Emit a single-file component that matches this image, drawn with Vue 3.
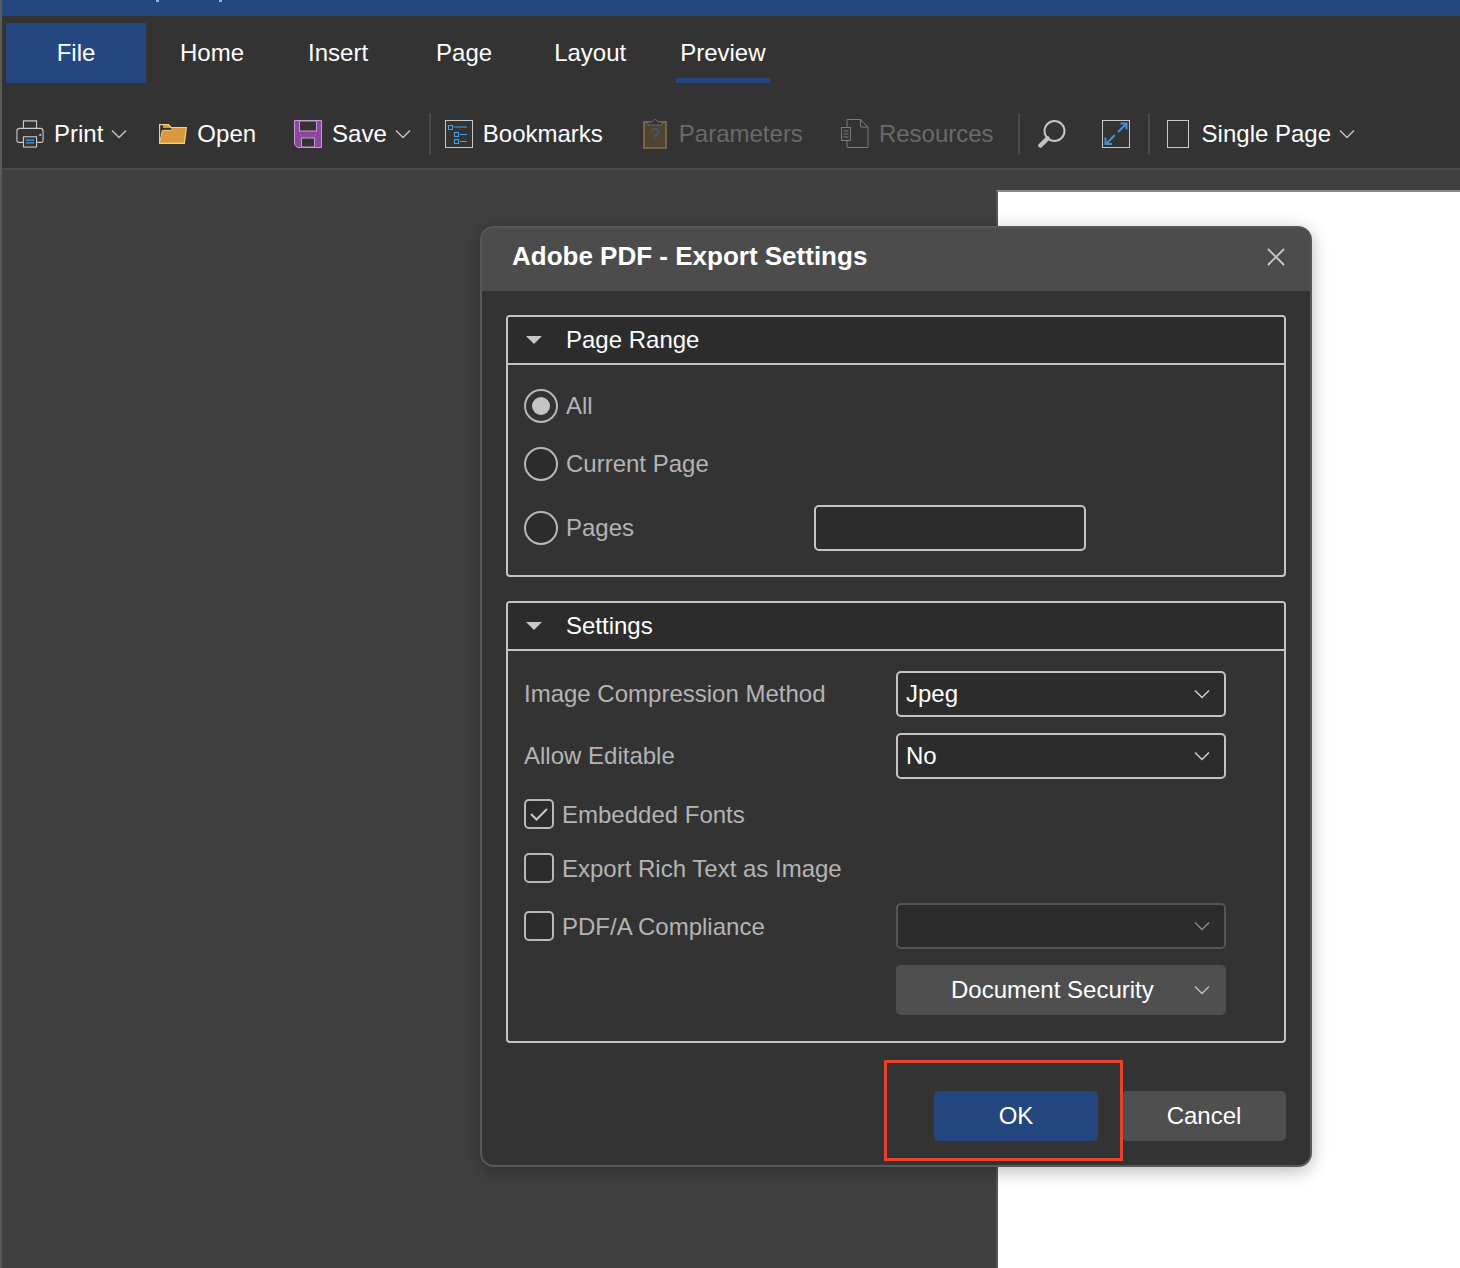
<script setup>
const tabs = [
  { label: 'Home', cls: 'tab-home' },
  { label: 'Insert', cls: 'tab-insert' },
  { label: 'Page', cls: 'tab-page' },
  { label: 'Layout', cls: 'tab-layout' },
  { label: 'Preview', cls: 'tab-preview active' }
];
</script>

<template>
  <div class="app">
    <div class="title-strip"><i class="tick t1"></i><i class="tick t2"></i></div>

    <nav class="tabs">
      <div class="tab-file">File</div>
      <div v-for="t in tabs" :key="t.label" class="tab" :class="t.cls">{{ t.label }}</div>
    </nav>

    <div class="toolbar">
      <div class="tool t-print">
        <svg width="28" height="28" viewBox="0 0 30 30" fill="none">
          <path d="M8 9V1h14v8" stroke="#c8c8c8" stroke-width="1.2"/>
          <path d="M9 24H3a2 2 0 0 1-2-2v-10a3 3 0 0 1 3-3h22a3 3 0 0 1 3 3v10a2 2 0 0 1-2 2h-6" stroke="#c8c8c8" stroke-width="1.2"/>
          <rect x="8" y="18" width="14" height="11" fill="#333" stroke="#c8c8c8" stroke-width="1.2"/>
          <path d="M10.5 21.5h9M10.5 24.5h9" stroke="#4a9ee0" stroke-width="1.4"/>
          <rect x="25" y="15" width="2" height="2" fill="#c8c8c8"/>
        </svg>
        <span>Print</span>
        <svg class="chev c-print" width="16" height="10" viewBox="0 0 16 10" fill="none"><path d="M1 1.5l7 7 7-7" stroke="#c0c0c0" stroke-width="1.5"/></svg>
      </div>
      <div class="tool t-open">
        <svg width="28" height="20" viewBox="0 0 28 20">
          <path d="M0.600 19.400V0.600h9l2.400 2.900H27.400L25.400 19.400z" fill="#d99a3f" stroke="#f0d080" stroke-width="1.200"/>
          <path d="M1.200 19L3.400 6.400H11l1.500-2.300H4V1.200H1.200z" fill="#333"/>
          <path d="M0.600 19.400L3.400 6.400H11.500" fill="none" stroke="#f0d080" stroke-width="1"/>
        </svg>
        <span>Open</span>
      </div>
      <div class="tool t-save">
        <svg width="28" height="28" viewBox="0 0 28 28">
          <path d="M0.500 0.500h27v27H3.500l-3-3z" fill="#8c479e" stroke="#c89ad4" stroke-width="1"/>
          <rect x="5.500" y="1" width="17" height="10" fill="#333" stroke="#c89ad4" stroke-width="1"/>
          <rect x="7.500" y="18" width="13" height="9" fill="#333" stroke="#c89ad4" stroke-width="1"/>
        </svg>
        <span>Save</span>
        <svg class="chev c-save" width="16" height="10" viewBox="0 0 16 10" fill="none"><path d="M1 1.500l7 7 7-7" stroke="#c0c0c0" stroke-width="1.500"/></svg>
      </div>
      <i class="sep s1"></i>
      <div class="tool t-bookmarks">
        <svg width="28" height="28" viewBox="0 0 28 28" fill="none">
          <rect x="0.500" y="0.500" width="27" height="27" stroke="#c8c8c8"/>
          <path d="M3.500 5.500h4v4h-4zM9 7h13M9.500 12.500h4v4h-4zM15 14.500h7M9.500 19.500h4v4h-4zM15 21.500h7" stroke="#4a9ee0" stroke-width="1.100"/>
        </svg>
        <span>Bookmarks</span>
      </div>
      <div class="tool t-params muted">
        <svg width="24" height="31" viewBox="0 0 24 31" fill="none">
          <rect x="1" y="4" width="22" height="26" fill="#4f4434" stroke="#8a6f45" stroke-width="1.600"/>
          <path d="M5 7V4h4l3-3 3 3h4v3z" fill="#333" stroke="#666" stroke-width="1"/>
          <text x="12" y="23" text-anchor="middle" class="q">?</text>
        </svg>
        <span>Parameters</span>
      </div>
      <div class="tool t-resources muted">
        <svg width="28" height="29" viewBox="0 0 28 29" fill="none">
          <path d="M6 28.500h21V8L19.500 0.500H6z" stroke="#7a7a7a" stroke-width="1"/>
          <path d="M19.500 0.500V8H27" stroke="#7a7a7a" stroke-width="1"/>
          <rect x="0.500" y="8.500" width="9" height="13" fill="#333" stroke="#7a7a7a" stroke-width="1"/>
          <path d="M2.500 12h5M2.500 15h5M2.500 18h5" stroke="#7a7a7a" stroke-width="1"/>
        </svg>
        <span>Resources</span>
      </div>
      <i class="sep s2"></i>
      <div class="tool t-search">
        <svg width="28" height="28" viewBox="0 0 28 28" fill="none">
          <circle cx="16.500" cy="11" r="10" stroke="#c4c4c4" stroke-width="2"/>
          <path d="M9.500 18.500L2.500 25.500" stroke="#c4c4c4" stroke-width="4.500" stroke-linecap="round"/>
        </svg>
      </div>
      <div class="tool t-expand">
        <svg width="28" height="28" viewBox="0 0 28 28" fill="none">
          <rect x="0.500" y="0.500" width="27" height="27" stroke="#c8c8c8"/>
          <path d="M16 12l8-8M18.500 3.500h6v6M13 15l-8.500 8.500M3.500 17.500v6.500h6.500" stroke="#4a8fd4" stroke-width="2"/>
        </svg>
      </div>
      <i class="sep s3"></i>
      <div class="tool t-single">
        <span class="page-icon"></span>
        <span>Single Page</span>
        <svg class="chev c-single" width="16" height="10" viewBox="0 0 16 10" fill="none"><path d="M1 1.500l7 7 7-7" stroke="#c0c0c0" stroke-width="1.500"/></svg>
      </div>
    </div>

    <main class="viewer">
      <div class="sheet"></div>
    </main>

    <section class="dialog">
      <header class="dialog-head">
        <h1>Adobe PDF - Export Settings</h1>
        <svg width="18" height="18" viewBox="0 0 18 18" fill="none"><path d="M1 1l16 16M17 1L1 17" stroke="#c8c8c8" stroke-width="1.800"/></svg>
      </header>
      <div class="dialog-body">
        <div class="group">
          <div class="group-head"><span class="caret"></span>Page Range</div>
          <div class="range-body">
            <div class="row r-all"><span class="radio on"></span><label>All</label></div>
            <div class="row r-cur"><span class="radio"></span><label>Current Page</label></div>
            <div class="row r-pages"><span class="radio"></span><label class="pages-label">Pages</label><span class="input"></span></div>
          </div>
        </div>

        <div class="group">
          <div class="group-head"><span class="caret"></span>Settings</div>
          <div class="settings-body">
            <div class="row s-img">
              <label class="col">Image Compression Method</label>
              <div class="select">Jpeg<svg width="16" height="10" viewBox="0 0 16 10" fill="none"><path d="M1 1.500l7 7 7-7" stroke="#d0d0d0" stroke-width="1.500"/></svg></div>
            </div>
            <div class="row s-edit">
              <label class="col">Allow Editable</label>
              <div class="select">No<svg width="16" height="10" viewBox="0 0 16 10" fill="none"><path d="M1 1.500l7 7 7-7" stroke="#d0d0d0" stroke-width="1.500"/></svg></div>
            </div>
            <div class="row s-fonts">
              <span class="check">
                <svg width="20" height="16" viewBox="0 0 20 16" fill="none"><path d="M2 8l5.500 5.500L18 3" stroke="#c4c4c4" stroke-width="2.200"/></svg>
              </span>
              <label class="low">Embedded Fonts</label>
            </div>
            <div class="row s-rich"><span class="check"></span><label class="low">Export Rich Text as Image</label></div>
            <div class="row s-pdfa">
              <span class="check"></span><label class="col-check low">PDF/A Compliance</label>
              <div class="select disabled"><svg width="16" height="10" viewBox="0 0 16 10" fill="none"><path d="M1 1.500l7 7 7-7" stroke="#8a8a8a" stroke-width="1.500"/></svg></div>
            </div>
            <div class="security">
              <span>Document Security</span>
              <svg width="16" height="10" viewBox="0 0 16 10" fill="none"><path d="M1 1.500l7 7 7-7" stroke="#c0c0c0" stroke-width="1.500"/></svg>
            </div>
          </div>
        </div>

        <footer class="actions">
          <button class="btn primary">OK</button>
          <button class="btn">Cancel</button>
        </footer>
      </div>
      <div class="callout"></div>
    </section>
  </div>
</template>

<style>
html, body { margin: 0; background: #404040; }
</style>

<style scoped>
.app {
  position: relative;
  width: 1460px;
  height: 1268px;
  overflow: hidden;
  display: flex;
  flex-direction: column;
  background: #333;
  border-left: 2px solid #5a5a5a;
  box-sizing: border-box;
  font-family: "Liberation Sans", Arial, sans-serif;
  font-size: 24px;
  color: #fff;
}
.title-strip { height: 16px; background: #24477f; flex: none; display: flex; align-items: flex-start; }
.tick { display: block; width: 3px; height: 2px; background: #9fb2cf; }
.t1 { margin-left: 154px; }
.t2 { margin-left: 60px; }

.tabs { height: 67px; padding-top: 7px; box-sizing: border-box; display: flex; flex: none; }
.tab-file {
  width: 140px;
  height: 60px;
  margin-left: 4px;
  background: #24477f;
  display: flex;
  align-items: center;
  justify-content: center;
}
.tab { height: 60px; line-height: 60px; box-sizing: border-box; }
.tab-home { margin-left: 34px; }
.tab-insert { margin-left: 64px; }
.tab-page { margin-left: 68px; }
.tab-layout { margin-left: 62px; }
.tab-preview { margin-left: 50px; padding: 0 4px; }
.active { border-bottom: 5px solid #24477f; }

.toolbar {
  height: 87px;
  flex: none;
  box-sizing: border-box;
  border-bottom: 2px solid #4a4a4a;
  display: flex;
  align-items: center;
  padding: 19px 0 3px;
}
.tool { display: flex; align-items: center; flex: none; }
.tool svg { flex: none; display: block; }
.muted { color: #6a6a6a; }
.q { font-size: 18px; fill: #3d5876; font-family: "Liberation Sans", Arial, sans-serif; }
.t-print { margin-left: 14px; gap: 10px; }
.c-print { margin-left: -2px; }
.t-open { margin-left: 32px; gap: 10px; }
.t-save { margin-left: 38px; gap: 10px; }
.c-save { margin-left: -2px; }
.sep { display: block; width: 2px; height: 42px; background: #4a4a4a; flex: none; }
.s1 { margin-left: 18px; }
.t-bookmarks { margin-left: 14px; gap: 10px; }
.t-params { margin-left: 40px; gap: 12px; }
.t-resources { margin-left: 38px; gap: 10px; }
.s2 { margin-left: 24px; }
.t-search { margin-left: 18px; }
.t-expand { margin-left: 36px; }
.s3 { margin-left: 18px; }
.t-single { margin-left: 17px; gap: 13px; }
.c-single { margin-left: -5px; }
.page-icon { width: 22px; height: 28px; box-sizing: border-box; border: 1px solid #c8c8c8; }

.viewer { flex: 1; background: #404040; position: relative; }
.sheet {
  position: absolute;
  left: 994px;
  top: 20px;
  right: 0;
  bottom: 0;
  background: #fff;
  border-top: 2px solid #8a8a8a;
  border-left: 2px solid #555;
}

.dialog {
  position: absolute;
  left: 478px;
  top: 226px;
  width: 832px;
  height: 941px;
  box-sizing: border-box;
  border: 2px solid #585858;
  border-radius: 14px;
  background: #333;
  box-shadow: 0 4px 18px rgba(0, 0, 0, 0.28);
  overflow: visible;
}
.dialog-head {
  height: 63px;
  box-sizing: border-box;
  background: #4c4c4c;
  border-radius: 12px 12px 0 0;
  padding: 0 25px 6px 30px;
  display: flex;
  align-items: center;
  justify-content: space-between;
}
.dialog-head h1 { margin: 0; font-size: 26px; font-weight: 700; }
.dialog-body { padding: 24px 24px 0; }

.group { border: 2px solid #c4c4c4; border-radius: 4px; margin-bottom: 24px; overflow: hidden; }
.group-head {
  height: 48px;
  box-sizing: border-box;
  background: #2c2c2c;
  border-bottom: 2px solid #c4c4c4;
  display: flex;
  align-items: center;
  padding-left: 18px;
}
.caret {
  width: 0;
  height: 0;
  border-left: 8px solid transparent;
  border-right: 8px solid transparent;
  border-top: 8px solid #c8c8c8;
  margin-right: 24px;
}
.row { display: flex; align-items: center; color: #b4b4b4; }
.low { padding-top: 2px; }
.range-body { height: 210px; box-sizing: border-box; padding: 24px 16px 0; }
.r-cur { margin-top: 24px; }
.r-pages { margin-top: 24px; height: 46px; }
.radio {
  width: 34px;
  height: 34px;
  box-sizing: border-box;
  border: 2px solid #b8b8b8;
  border-radius: 50%;
  background: #2c2c2c;
  margin-right: 8px;
  flex: none;
  display: flex;
  align-items: center;
  justify-content: center;
}
.radio.on { background: #333; }
.radio.on::after { content: ""; width: 18px; height: 18px; border-radius: 50%; background: #c4c4c4; }
.pages-label { width: 248px; }
.input {
  width: 272px;
  height: 46px;
  box-sizing: border-box;
  border: 2px solid #c4c4c4;
  border-radius: 5px;
  background: #2c2c2c;
}

.settings-body { height: 390px; box-sizing: border-box; padding: 20px 16px 0; }
.col { width: 372px; flex: none; }
.col-check { width: 334px; flex: none; }
.select {
  width: 330px;
  height: 46px;
  box-sizing: border-box;
  border: 2px solid #c4c4c4;
  border-radius: 5px;
  background: #2c2c2c;
  color: #fff;
  display: flex;
  align-items: center;
  justify-content: space-between;
  padding: 0 14px 0 8px;
  flex: none;
}
.select.disabled { border-color: #555; justify-content: flex-end; }
.s-edit { margin-top: 16px; }
.s-fonts { margin-top: 20px; height: 30px; }
.s-rich { margin-top: 24px; height: 30px; }
.s-pdfa { margin-top: 20px; height: 46px; }
.check {
  width: 30px;
  height: 30px;
  box-sizing: border-box;
  border: 2px solid #b8b8b8;
  border-radius: 5px;
  background: #2c2c2c;
  margin-right: 8px;
  flex: none;
  display: flex;
  align-items: center;
  justify-content: center;
}
.security {
  width: 330px;
  height: 50px;
  box-sizing: border-box;
  margin: 16px 0 0 372px;
  background: #4f4f4f;
  border-radius: 5px;
  display: flex;
  align-items: center;
  padding: 0 16px 0 55px;
  justify-content: space-between;
}

.actions { display: flex; justify-content: flex-end; gap: 24px; margin-top: 48px; }
.btn {
  width: 164px;
  height: 50px;
  border: 0;
  border-radius: 5px;
  background: #4f4f4f;
  color: #fff;
  font: inherit;
  padding: 0;
}
.btn.primary { background: #24477f; }
.callout {
  position: absolute;
  left: 402px;
  top: 832px;
  width: 239px;
  height: 101px;
  box-sizing: border-box;
  border: 3px solid #e8432a;
  pointer-events: none;
}
</style>
